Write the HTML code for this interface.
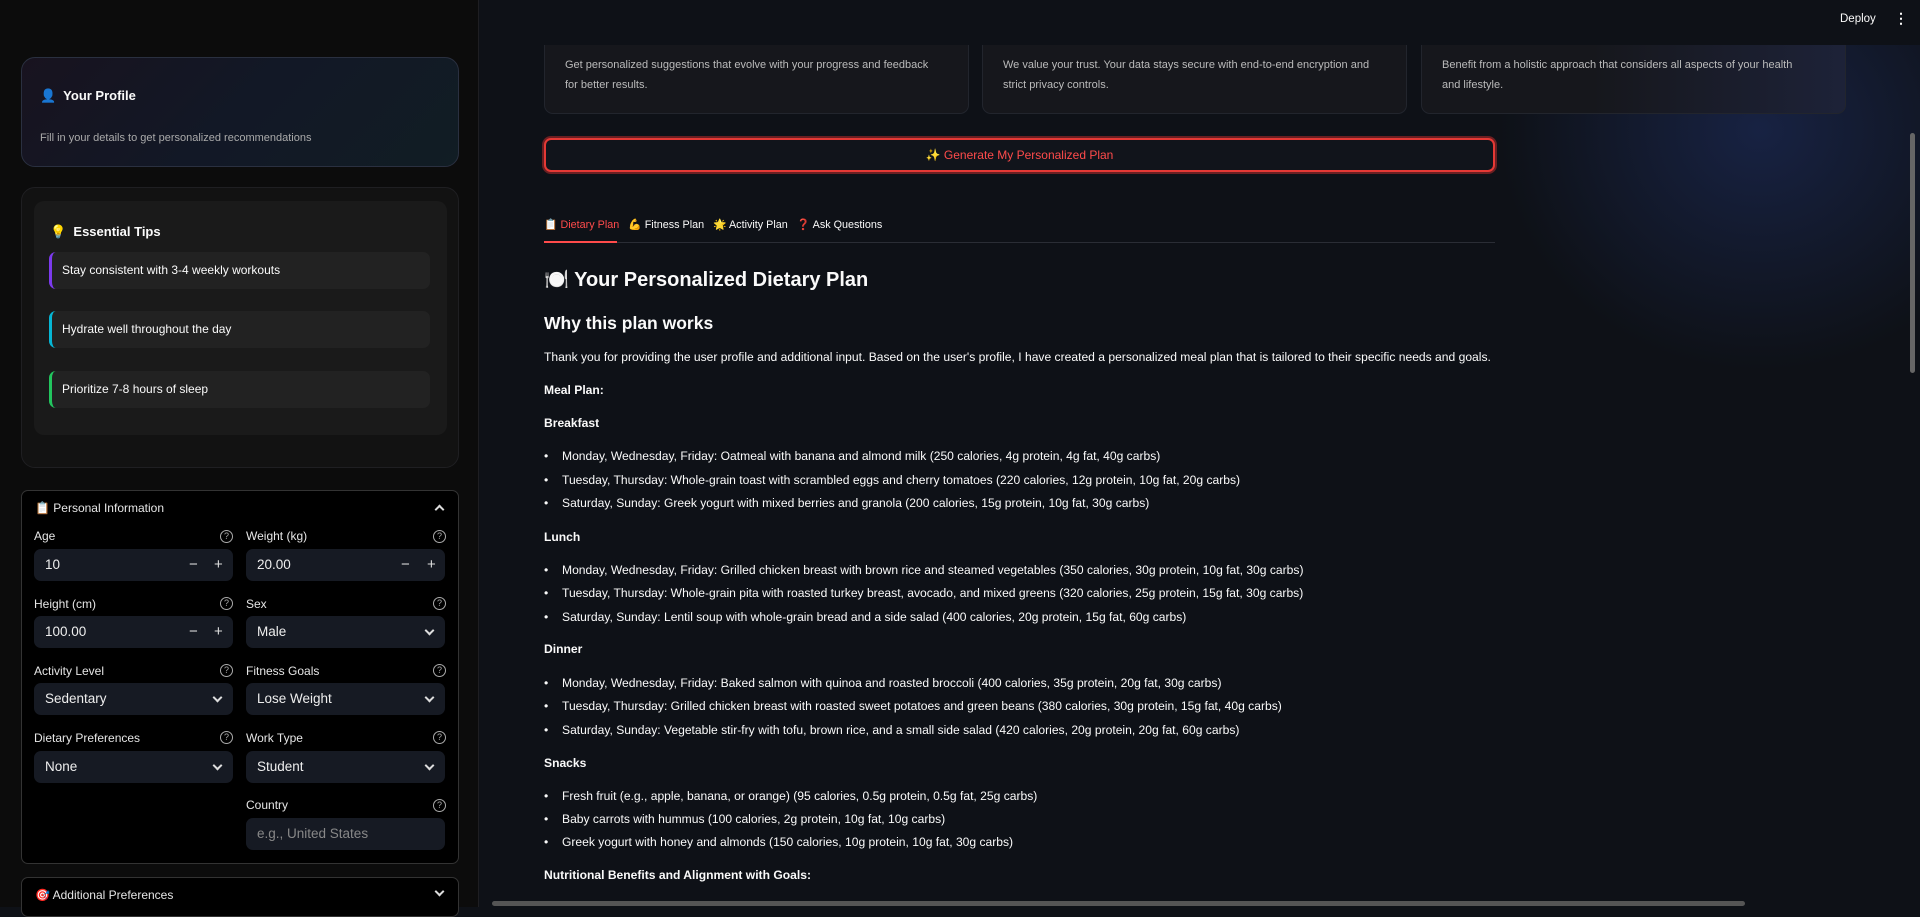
<!DOCTYPE html>
<html><head><meta charset="utf-8"><style>
*{box-sizing:border-box;margin:0;padding:0}
body{width:1920px;height:907px;overflow:hidden;background:#0e1117;font-family:"Liberation Sans","Noto Sans CJK JP",sans-serif;color:#fafafa;position:relative}
.sb{position:absolute;left:0;top:0;width:479px;height:907px;background:#0c0c0c;border-right:1px solid #1e1e22}
.abs{position:absolute}
.card{border-radius:14px}
.lbl{font-size:12px;color:#e6e6e6}
.q{position:absolute;width:13px;height:13px;border:1px solid #aaa;border-radius:50%;font-size:9px;color:#aaa;text-align:center;line-height:11px}
.inp{position:absolute;height:32px;background:#161a23;border-radius:7px;font-size:13.5px;line-height:32px;padding-left:11px;color:#eee}
.chev{position:absolute;right:12px;top:11px;width:7px;height:7px;border-right:2px solid #ddd;border-bottom:2px solid #ddd;transform:rotate(45deg)}
.pm{position:absolute;top:0;font-size:15px;color:#ddd}
.main{position:absolute;left:544px;width:951px;font-size:12.1px;color:#fafafa}
.main li{position:absolute;left:18px;list-style:none;white-space:nowrap}
.main li:before{content:"•";position:absolute;left:-18px}
.t{position:absolute;white-space:nowrap}
</style></head><body>
<div style="position:absolute;left:1500px;top:0;width:420px;height:907px;background:radial-gradient(ellipse 260px 240px at 260px 130px,rgba(35,55,120,.45),rgba(14,17,23,0))"></div>
<div class="sb">
 <div class="abs card" style="left:21px;top:57px;width:438px;height:110px;border:1px solid #2a3040;background:linear-gradient(135deg,#18131f,#121826 50%,#111d24)">
  <div class="t" style="left:18px;top:30px;font-size:13px;font-weight:bold">👤&nbsp; Your Profile</div>
  <div class="t" style="left:18px;top:74px;font-size:11px;color:#aaa">Fill in your details to get personalized recommendations</div>
 </div>
 <div class="abs card" style="left:21px;top:187px;width:438px;height:281px;border:1px solid #1f1f22;background:#121212">
  <div class="abs" style="left:12px;top:13px;width:413px;height:234px;background:#1a1a1a;border-radius:10px">
   <div class="t" style="left:16px;top:23px;font-size:13px;font-weight:bold">💡&nbsp; Essential Tips</div>
   <div class="abs" style="left:15px;top:51px;width:381px;height:37px;background:#222;border-radius:7px;border-left:3px solid #7c3aed"><span class="t" style="left:10px;top:11px;font-size:12px">Stay consistent with 3-4 weekly workouts</span></div>
   <div class="abs" style="left:15px;top:110px;width:381px;height:37px;background:#222;border-radius:7px;border-left:3px solid #06b6d4"><span class="t" style="left:10px;top:11px;font-size:12px">Hydrate well throughout the day</span></div>
   <div class="abs" style="left:15px;top:170px;width:381px;height:37px;background:#222;border-radius:7px;border-left:3px solid #22c55e"><span class="t" style="left:10px;top:11px;font-size:12px">Prioritize 7-8 hours of sleep</span></div>
  </div>
 </div>
 <div class="abs" style="left:21px;top:490px;width:438px;height:374px;border:1px solid #333;border-radius:7px;background:#000">
  <div class="t lbl" style="left:13px;top:10px">📋 Personal Information</div>
  <div class="abs" style="left:414px;top:15px;width:7px;height:7px;border-left:2px solid #ddd;border-top:2px solid #ddd;transform:rotate(45deg)"></div>
 </div>
 <div class="t lbl" style="left:34px;top:529px">Age</div><div class="q" style="left:220px;top:530px">?</div>
 <div class="t lbl" style="left:246px;top:529px">Weight (kg)</div><div class="q" style="left:433px;top:530px">?</div>
 <div class="inp" style="left:34px;top:549px;width:199px">10<span class="pm" style="left:155px">−</span><span class="pm" style="left:180px">+</span></div>
 <div class="inp" style="left:246px;top:549px;width:199px">20.00<span class="pm" style="left:155px">−</span><span class="pm" style="left:181px">+</span></div>
 <div class="t lbl" style="left:34px;top:597px">Height (cm)</div><div class="q" style="left:220px;top:597px">?</div>
 <div class="t lbl" style="left:246px;top:597px">Sex</div><div class="q" style="left:433px;top:597px">?</div>
 <div class="inp" style="left:34px;top:616px;width:199px">100.00<span class="pm" style="left:155px">−</span><span class="pm" style="left:180px">+</span></div>
 <div class="inp" style="left:246px;top:616px;width:199px">Male<span class="chev"></span></div>
 <div class="t lbl" style="left:34px;top:664px">Activity Level</div><div class="q" style="left:220px;top:664px">?</div>
 <div class="t lbl" style="left:246px;top:664px">Fitness Goals</div><div class="q" style="left:433px;top:664px">?</div>
 <div class="inp" style="left:34px;top:683px;width:199px">Sedentary<span class="chev"></span></div>
 <div class="inp" style="left:246px;top:683px;width:199px">Lose Weight<span class="chev"></span></div>
 <div class="t lbl" style="left:34px;top:731px">Dietary Preferences</div><div class="q" style="left:220px;top:731px">?</div>
 <div class="t lbl" style="left:246px;top:731px">Work Type</div><div class="q" style="left:433px;top:731px">?</div>
 <div class="inp" style="left:34px;top:751px;width:199px">None<span class="chev"></span></div>
 <div class="inp" style="left:246px;top:751px;width:199px">Student<span class="chev"></span></div>
 <div class="t lbl" style="left:246px;top:798px">Country</div><div class="q" style="left:433px;top:799px">?</div>
 <div class="inp" style="left:246px;top:818px;width:199px;color:#888">e.g., United States</div>
 <div class="abs" style="left:21px;top:877px;width:438px;height:40px;border:1px solid #333;border-radius:7px;background:#000">
  <div class="t lbl" style="left:13px;top:10px">🎯 Additional Preferences</div>
  <div class="abs" style="left:414px;top:10px;width:7px;height:7px;border-right:2px solid #ddd;border-bottom:2px solid #ddd;transform:rotate(45deg)"></div>
 </div>
</div>
<div class="abs" style="left:480px;top:0;width:1440px;height:45px;background:#0e1117"></div>
<div class="t" style="left:1840px;top:13px;font-size:11.5px">Deploy</div>
<div class="t" style="left:1894px;top:10px;font-size:14px;font-weight:bold">⋮</div>
<div class="abs" style="left:544px;top:45px;width:425px;height:69px;background:#16171c;border:1px solid #22252d;border-top:none;border-radius:0 0 9px 9px"><span class="t" style="left:20px;top:10px;font-size:11px;color:#bbb;line-height:20px">Get personalized suggestions that evolve with your progress and feedback<br>for better results.</span></div>
<div class="abs" style="left:982px;top:45px;width:425px;height:69px;background:#16171c;border:1px solid #22252d;border-top:none;border-radius:0 0 9px 9px"><span class="t" style="left:20px;top:10px;font-size:11px;color:#bbb;line-height:20px">We value your trust. Your data stays secure with end-to-end encryption and<br>strict privacy controls.</span></div>
<div class="abs" style="left:1421px;top:45px;width:425px;height:69px;background:linear-gradient(90deg,#16171c 40%,#1d2238);border:1px solid #22252d;border-top:none;border-radius:0 0 9px 9px"><span class="t" style="left:20px;top:10px;font-size:11px;color:#bbb;line-height:20px">Benefit from a holistic approach that considers all aspects of your health<br>and lifestyle.</span></div>
<div class="abs" style="left:544px;top:138px;width:951px;height:34px;border:2px solid #e53935;box-shadow:0 0 0 2px #6b1f22;border-radius:7px;background:#11141b;text-align:center;line-height:30px;font-size:12px;color:#ff4b4b">✨ Generate My Personalized Plan</div>
<div class="t" style="left:544px;top:218px;font-size:10.8px"><span style="color:#ff4b4b">📋 Dietary Plan</span>&nbsp;&nbsp; 💪 Fitness Plan &nbsp; 🌟 Activity Plan &nbsp; ❓ Ask Questions</div>
<div class="abs" style="left:544px;top:242px;width:951px;height:1px;background:#2a2d35"></div>
<div class="abs" style="left:544px;top:241px;width:73px;height:2px;background:#ff4b4b"></div>
<div class="main" style="top:0;height:907px">
 <div class="t" style="top:267px;font-size:20px;font-weight:bold">🍽️ Your Personalized Dietary Plan</div>
 <div class="t" style="top:313px;font-size:17.5px;font-weight:bold">Why this plan works</div>
 <div class="t" style="top:350px">Thank you for providing the user profile and additional input. Based on the user's profile, I have created a personalized meal plan that is tailored to their specific needs and goals.</div>
 <div class="t" style="top:383px;font-weight:bold">Meal Plan:</div>
 <div class="t" style="top:416px;font-weight:bold">Breakfast</div>
 <li style="top:449px">Monday, Wednesday, Friday: Oatmeal with banana and almond milk (250 calories, 4g protein, 4g fat, 40g carbs)</li>
 <li style="top:473px">Tuesday, Thursday: Whole-grain toast with scrambled eggs and cherry tomatoes (220 calories, 12g protein, 10g fat, 20g carbs)</li>
 <li style="top:496px">Saturday, Sunday: Greek yogurt with mixed berries and granola (200 calories, 15g protein, 10g fat, 30g carbs)</li>
 <div class="t" style="top:530px;font-weight:bold">Lunch</div>
 <li style="top:563px">Monday, Wednesday, Friday: Grilled chicken breast with brown rice and steamed vegetables (350 calories, 30g protein, 10g fat, 30g carbs)</li>
 <li style="top:586px">Tuesday, Thursday: Whole-grain pita with roasted turkey breast, avocado, and mixed greens (320 calories, 25g protein, 15g fat, 30g carbs)</li>
 <li style="top:610px">Saturday, Sunday: Lentil soup with whole-grain bread and a side salad (400 calories, 20g protein, 15g fat, 60g carbs)</li>
 <div class="t" style="top:642px;font-weight:bold">Dinner</div>
 <li style="top:676px">Monday, Wednesday, Friday: Baked salmon with quinoa and roasted broccoli (400 calories, 35g protein, 20g fat, 30g carbs)</li>
 <li style="top:699px">Tuesday, Thursday: Grilled chicken breast with roasted sweet potatoes and green beans (380 calories, 30g protein, 15g fat, 40g carbs)</li>
 <li style="top:723px">Saturday, Sunday: Vegetable stir-fry with tofu, brown rice, and a small side salad (420 calories, 20g protein, 20g fat, 60g carbs)</li>
 <div class="t" style="top:756px;font-weight:bold">Snacks</div>
 <li style="top:789px">Fresh fruit (e.g., apple, banana, or orange) (95 calories, 0.5g protein, 0.5g fat, 25g carbs)</li>
 <li style="top:812px">Baby carrots with hummus (100 calories, 2g protein, 10g fat, 10g carbs)</li>
 <li style="top:835px">Greek yogurt with honey and almonds (150 calories, 10g protein, 10g fat, 30g carbs)</li>
 <div class="t" style="top:868px;font-weight:bold">Nutritional Benefits and Alignment with Goals:</div>
</div>
<div class="abs" style="left:1910px;top:133px;width:5px;height:240px;background:#666;border-radius:3px"></div>
<div class="abs" style="left:492px;top:901px;width:1253px;height:5px;background:#555;border-radius:3px"></div>
</body></html>
